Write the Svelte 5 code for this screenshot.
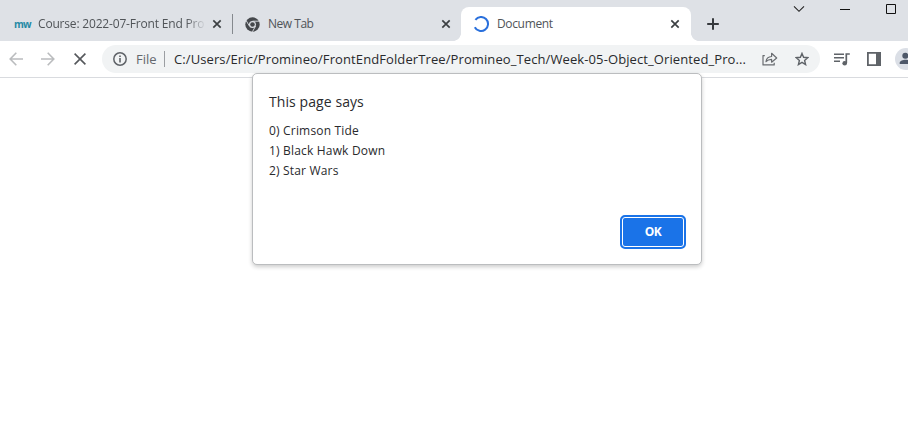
<script>
  const url = 'C:/Users/Eric/Promineo/FrontEndFolderTree/Promineo_Tech/Week-05-Object_Oriented_Pro...';
  const movies = ['Crimson Tide', 'Black Hawk Down', 'Star Wars'];
</script>

{#snippet close()}
  <svg class="close" width="10" height="10" viewBox="0 0 10 10"><path d="M1.3 1.3l7.4 7.4M8.7 1.3L1.3 8.7" stroke="#3c4043" stroke-width="1.7" fill="none" /></svg>
{/snippet}

<div class="browser">
  <header class="tabs">
    <div class="tab first">
      <span class="mw">mw</span>
      <span class="title fade">Course: 2022-07-Front End Pro</span>
      {@render close()}
    </div>
    <div class="tab second">
      <svg class="chrome" width="15" height="15" viewBox="0 0 15 15">
        <circle cx="7.5" cy="7.5" r="7.2" fill="#45484c" />
        <g stroke="#dee1e6" stroke-width=".9" fill="none">
          <path d="M7.5 4.2H14M4.5 9.2L1.2 3.7M10.5 9.2L7.4 14.8" />
        </g>
        <circle cx="7.5" cy="7.5" r="3.5" fill="#dee1e6" />
        <circle cx="7.5" cy="7.5" r="2.3" fill="#45484c" />
      </svg>
      <span class="title">New Tab</span>
      {@render close()}
    </div>
    <div class="tab active">
      <i class="curve left"></i>
      <svg class="spinner" width="16" height="16" viewBox="0 0 16 16"><path d="M2.4 3.8A7 7 0 1 1 1.8 11.2" fill="none" stroke="#2a70dc" stroke-width="2" /></svg>
      <span class="title">Document</span>
      {@render close()}
      <i class="curve right"></i>
    </div>
    <svg class="plus" width="12" height="12" viewBox="0 0 12 12"><path d="M6 .2v11.6M.2 6h11.6" stroke="#36393d" stroke-width="2" /></svg>
    <div class="window-controls">
      <svg width="12" height="8" viewBox="0 0 12 8"><path d="M1 1.3l5 5 5-5" fill="none" stroke="#222" stroke-width="1.1" /></svg>
      <svg width="10" height="10" viewBox="0 0 10 10"><path d="M0 5.5h10" stroke="#111" /></svg>
      <svg width="10" height="10" viewBox="0 0 10 10"><path d="M.5.5h9v9h-9z" fill="none" stroke="#111" /></svg>
    </div>
  </header>

  <nav class="toolbar">
    <svg class="back" width="14" height="14" viewBox="0 0 14 14"><path d="M14 7H1.3M7.3 .8L1.2 7l6.1 6.2" fill="none" stroke="#babcbe" stroke-width="1.6" /></svg>
    <svg class="forward" width="14" height="14" viewBox="0 0 14 14"><path d="M0 7h12.7M6.7 .8L12.8 7l-6.1 6.2" fill="none" stroke="#babcbe" stroke-width="1.6" /></svg>
    <svg class="stop" width="12" height="12" viewBox="0 0 12 12"><path d="M.6.6l10.8 10.8M11.4.6L.6 11.4" stroke="#55585c" stroke-width="1.6" /></svg>
    <div class="omnibox">
      <svg class="info" width="14" height="14" viewBox="0 0 14 14"><circle cx="7" cy="7" r="6.2" fill="none" stroke="#5f6368" stroke-width="1.5" /><path d="M7 6v4.5M7 3.4V5" stroke="#5f6368" stroke-width="1.6" /></svg>
      <span class="file">File</span>
      <span class="divider"></span>
      <span class="url">{url}</span>
      <svg class="share" width="16" height="14" viewBox="0 0 16 14"><path d="M2.8 3.6H1v9.3h11.2v-2.1M4 9.7C4.4 6.3 6.2 4.7 9.6 4.5V1.3L14.7 6l-5.1 4.2V7.4C7.2 7.4 5.4 8 4 9.7z" fill="none" stroke="#6a6d71" stroke-width="1.2" stroke-linejoin="round" /></svg>
      <svg class="star" width="14" height="14" viewBox="0 0 14 14"><path d="M7 1.4l1.6 3.9 4.2.4-3.2 2.7 1 4.2L7 10.4l-3.6 2.2 1-4.2L1.2 5.7l4.2-.4z" fill="none" stroke="#5f6368" stroke-width="1.4" /></svg>
    </div>
    <svg class="media" width="16" height="13" viewBox="0 0 16 13"><path d="M0 1.2h10M0 4.7h10M0 8.2h6" stroke="#5f6368" stroke-width="1.5" /><path d="M12.3 10V1h3.5" fill="none" stroke="#5f6368" stroke-width="1.7" /><circle cx="10.7" cy="10.2" r="2.3" fill="#5f6368" /></svg>
    <svg class="panel" width="14" height="14" viewBox="0 0 14 14"><path d="M.9.9h12.2v12.2H.9z" fill="none" stroke="#5f6368" stroke-width="1.8" /><path d="M9 0h5v14H9z" fill="#5f6368" /></svg>
    <svg class="avatar" width="22" height="22" viewBox="0 0 22 22"><circle cx="11" cy="11" r="11" fill="#dbdfe6" /><circle cx="10.3" cy="7.8" r="3" fill="#4e5869" /><path d="M4.7 16v-1.3c0-2 3.5-3 5.8-3s5.8 1 5.8 3V16z" fill="#4e5869" /></svg>
  </nav>

  <main>
    <section class="dialog" role="alertdialog" aria-label="This page says">
      <h1>This page says</h1>
      <div class="message">
        {#each movies as movie, i}
          <div class="line">{i}) {movie}</div>
        {/each}
      </div>
      <div class="actions"><button>OK</button></div>
    </section>
  </main>
</div>

<style>
  :global(body) { margin: 0; background: #fff; overflow: hidden; }
  .browser { width: 908px; height: 442px; overflow: hidden; background: #fff; font-family: "Open Sans", "Noto Sans", sans-serif; color: #292a2d; }
  svg { display: block; flex: none; }
  .tabs { height: 41px; background: #dee1e6; display: flex; }
  .tab { height: 34px; margin-top: 7px; display: flex; align-items: center; box-sizing: border-box; flex: none; }
  .title { font-size: 12px; line-height: 16px; white-space: nowrap; color: #505458; letter-spacing: -.18px; }
  .close { margin-left: auto; }
  .first { width: 232px; padding: 0 10px 0 14px; }
  .mw { width: 24px; flex: none; font: bold 10px/14px "Open Sans", sans-serif; color: #268aa5; letter-spacing: -.8px; }
  .first .title { width: 168px; overflow: hidden; letter-spacing: -.18px; }
  .fade { mask-image: linear-gradient(to right, #000 148px, transparent 168px); }
  .second { width: 229px; padding: 0 10px 0 13px; position: relative; }
  .second::before { content: ""; position: absolute; left: 0; top: 7px; width: 1px; height: 20px; background: #85898e; }
  .second .title { margin-left: 8px; letter-spacing: -.48px; }
  .active { width: 230px; background: #fff; border-radius: 8px 8px 0 0; padding: 0 11px 0 12px; position: relative; }
  .active .title { margin-left: 8px; letter-spacing: -.35px; }
  .curve { position: absolute; bottom: 0; width: 8px; height: 8px; }
  .left { left: -8px; background: radial-gradient(circle at 0 0, transparent 7.6px, #fff 8.2px); }
  .right { right: -8px; background: radial-gradient(circle at 100% 0, transparent 7.6px, #fff 8.2px); }
  .plus { margin: 18px 0 0 16px; }
  .window-controls { margin-left: auto; display: flex; align-items: flex-start; gap: 35px; padding: 4px 12px 0 0; }
  .window-controls svg:first-child { margin-top: 1px; }
  .window-controls svg:nth-child(2) { margin-right: 1px; }
  .toolbar { height: 37px; box-sizing: border-box; border-bottom: 1px solid #d9dbdf; display: flex; align-items: center; padding-left: 9px; overflow: hidden; }
  .forward { margin-left: 18px; }
  .stop { margin-left: 19px; }
  .omnibox { width: 718px; height: 28px; margin-left: 16px; border-radius: 14px; background: #f1f3f4; display: flex; align-items: center; box-sizing: border-box; padding-left: 11px; flex: none; }
  .file { width: 28px; margin-left: 9px; font-size: 13px; color: #64686d; }
  .divider { width: 1px; height: 16px; background: #9b9ea2; }
  .url { width: 573px; margin-left: 9px; font-size: 13px; white-space: nowrap; letter-spacing: .1px; }
  .share { margin-left: 15px; }
  .star { margin-left: 17px; }
  .media { margin-left: 14px; }
  .panel { margin-left: 17px; }
  .avatar { margin-left: 14px; }
  .dialog { position: absolute; left: 252px; top: 73px; width: 450px; height: 192px; box-sizing: border-box; background: #fff; border: 1px solid #bbbdbf; border-radius: 5px; box-shadow: 0 2px 4px #0003; padding: 17px 15px 15px 16px; display: flex; flex-direction: column; }
  h1 { margin: 0; font-size: 14px; line-height: 22px; font-weight: 400; letter-spacing: .08px; }
  .message { margin-top: 8px; font-size: 12px; line-height: 20px; white-space: nowrap; letter-spacing: .18px; }
  .line { width: max-content; }
  .actions { display: flex; justify-content: flex-end; margin-top: auto; }
  button { width: 66px; height: 34px; border: 2px solid #1a73e8; border-radius: 5px; background: #1a73e8; box-shadow: inset 0 0 0 1px #fff; color: #fff; padding: 0; font: bold 12px/16px "Open Sans", sans-serif; letter-spacing: -.4px; }
</style>
